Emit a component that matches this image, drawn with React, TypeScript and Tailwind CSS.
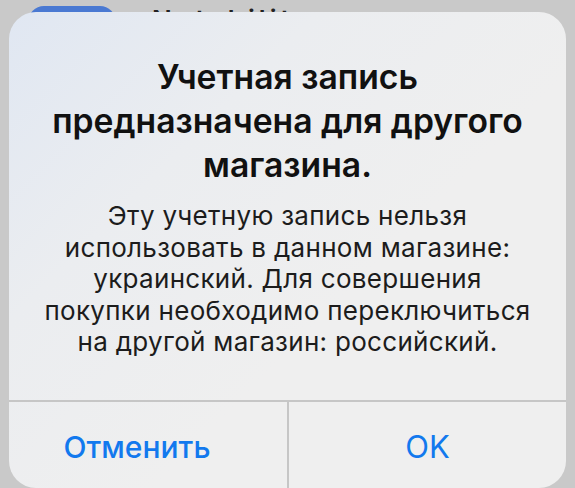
export default function App() {
  return (
    <div className="relative w-[575px] h-[488px] overflow-hidden bg-[#c9c9c9] pt-[12px] px-[9px]" style={{ fontFamily: "Inter, 'Noto Sans', sans-serif" }}>
      <div className="absolute left-[28px] top-[6px] w-[88px] h-[40px] rounded-[16px] bg-[#4a79d2]" />
      <div className="absolute left-[152px] top-[7px] text-[26px] leading-none font-semibold text-[#222] tracking-[4px]">Notability</div>
      <div className="relative flex flex-col h-[476px] rounded-[27px] overflow-hidden bg-[linear-gradient(135deg,#e0e7f2_0%,#ebedf0_30%,#efefef_60%,#efefef_100%)]">
        <div className="flex-1 flex flex-col items-center pt-[43px] px-[12px] text-center">
          <div className="text-[33.7px] leading-[44px] font-semibold text-[#111]">
            Учетная запись<br />предназначена для другого<br />магазина.
          </div>
          <div className="mt-[13px] text-[26px] leading-[31.5px] text-[#1c1c1c] tracking-[0.3px]">
            Эту учетную запись нельзя<br />использовать в данном магазине:<br />украинский. Для совершения<br />покупки необходимо переключиться<br />на другой магазин: российский.
          </div>
        </div>
        <div className="flex h-[88px] border-t-2 border-[#c6c6c6]">
          <div className="w-[278px] shrink-0 flex items-center justify-center text-[30px] font-medium text-[#1279ee] pr-[22px] pt-[5px]">Отменить</div>
          <div className="w-[2px] shrink-0 bg-[#c6c6c6]" />
          <div className="flex-1 flex items-center justify-center text-[31px] text-[#1279ee] pt-[5px]">OK</div>
        </div>
      </div>
    </div>
  );
}
